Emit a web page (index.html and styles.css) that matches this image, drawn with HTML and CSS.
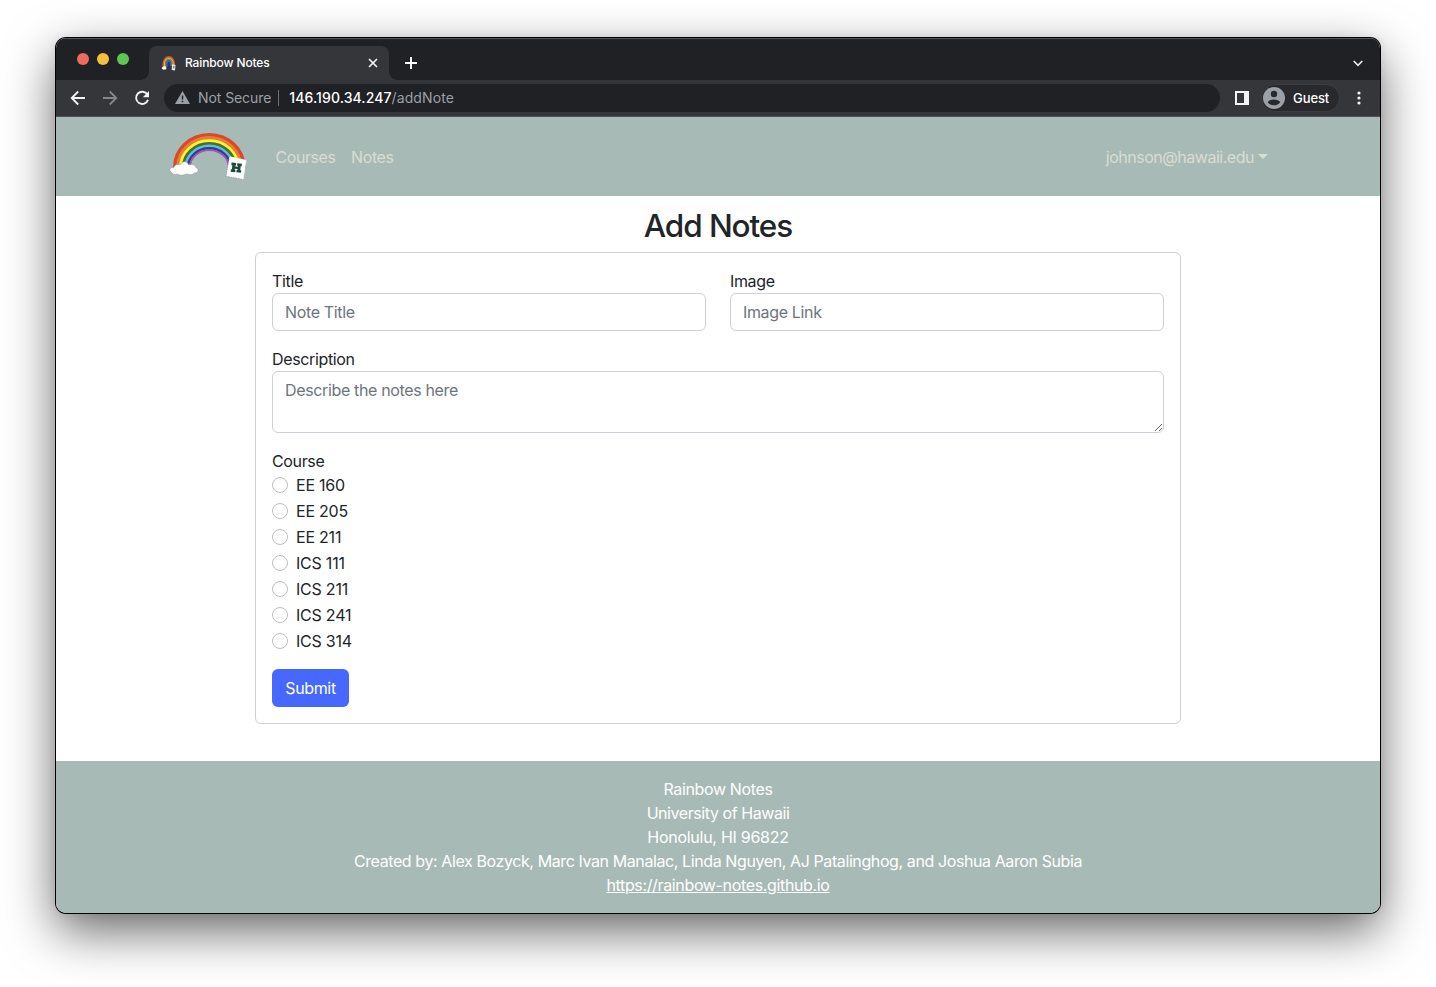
FILE: index.html
```html
<!DOCTYPE html>
<html lang="en">
<head>
<meta charset="utf-8">
<title>Rainbow Notes</title>
<link rel="stylesheet" href="styles.css">
</head>
<body>
<svg class="defs" width="0" height="0" aria-hidden="true">
  <symbol id="rainbow" viewBox="0 0 78 48">
    <g fill="none" stroke-width="3.2" transform="translate(.8 .3)">
      <path d="M5 36V35A34.5 32.5 0 0 1 74 35V36" stroke="#d8492c" stroke-width="3.6"/>
      <path d="M8 36V35A31.5 29.5 0 0 1 71 35V36" stroke="#ec7d2f"/>
      <path d="M10.9 36V35A28.6 26.5 0 0 1 68.1 35V36" stroke="#fdf13a"/>
      <path d="M13.6 36V35A25.9 23.8 0 0 1 65.4 35V36" stroke="#39782c"/>
      <path d="M16.1 36V35A23.4 21.3 0 0 1 62.9 35V36" stroke="#67b8dc" stroke-width="2.8"/>
      <path d="M18.2 36V35A21.3 19.1 0 0 1 60.8 35V36" stroke="#263f96" stroke-width="2.4"/>
      <path d="M20.1 36V35A19.4 17.2 0 0 1 58.9 35V36" stroke="#a552b2" stroke-width="1.8"/>
    </g>
    <path transform="translate(.3 0)" d="M3 41C-1 39 0 35 4.5 35.5C5.5 32 9 32 11 33C12.5 28.5 18 28.5 19.5 33C23 31.5 26 33 26.5 35.5C30.5 37 29 41 25 41C23 43.5 19 42.5 17 42C13 44 9 43 8 42C5 43 3.5 42.5 3 41Z" fill="#fff" stroke="#8d93a5" stroke-width=".5"/>
    <path d="M60.5 24.3L77.4 28L74.4 47.5L57 44.2Z" fill="#fff"/>
    <path d="M60.5 24.3L57 44.2L74.4 47.5" fill="none" stroke="#81908c" stroke-width=".7" stroke-dasharray="1.5 1"/>
    <path transform="translate(67.3 35.7) rotate(6)" d="M-5.2 -4.6H-.6V-2H-1.6V-1.2H1.6V-2H.6V-4.6H5.2V-2H4.2V2H5.2V4.6H.6V2H1.6V1.2H-1.6V2H-.6V4.6H-5.2V2H-4.2V-2H-5.2Z" fill="#1d4a3b"/>
  </symbol>
</svg>
<div class="window">
  <div class="tabstrip">
    <div class="lights"><i class="red"></i><i class="yellow"></i><i class="green"></i></div>
    <div class="tab">
      <svg class="favicon" viewBox="0 0 16 16"><g fill="none" stroke-width="1.5"><path d="M2.2 12V9.5C2.2 -1 13.4 -1 13.4 9.5V11" stroke="#dc5030"/><path d="M3.5 12V9.5C3.5 1 12.1 1 12.1 9.5V11" stroke="#f0b439"/><path d="M4.7 12V9.5C4.7 2.8 10.9 2.8 10.9 9.5V11" stroke="#4f9b53"/><path d="M5.8 12V9.5C5.8 4.6 9.8 4.6 9.8 9.5V11" stroke="#4361c4"/></g><path d="M7 15V9.8Q7.8 7.2 8.8 9.8V15z" fill="#35363a"/><path d="M.8 13.5q0-2 2-2q2-1 2.4 1q.8 2-1.5 2q-2 .6-2.9-1z" fill="#fff"/><path d="M11 9.3l3.5.8-.5 5.5-3.3-.6z" fill="#e5e9e9"/><path d="M12.3 10.8l1.2.4-.4 2.2-.9-.3z" fill="#536660"/></svg>
      <span class="tab-title">Rainbow Notes</span>
      <svg class="close" viewBox="0 0 10 10"><path d="M1 1l8 8M9 1l-8 8" fill="none" stroke="#f1f3f4" stroke-width="1.7"/></svg>
    </div>
    <svg class="plus" viewBox="0 0 12 12"><path d="M6 0v12M0 6h12" stroke="#fff" stroke-width="1.9"/></svg>
    <svg class="chevron" viewBox="0 0 10 7"><path d="M.7 1L5 5.3L9.3 1" fill="none" stroke="#e8eaed" stroke-width="1.7"/></svg>
  </div>
  <div class="toolbar">
    <div class="nav-icons">
      <svg viewBox="0 0 16 16"><path d="M15 8H2M8.2 1.5L1.7 8l6.5 6.5" fill="none" stroke="#f1f3f4" stroke-width="1.8"/></svg>
      <svg viewBox="0 0 16 16"><path d="M1 8h13M7.8 1.5L14.3 8l-6.5 6.5" fill="none" stroke="#85878a" stroke-width="1.8"/></svg>
      <svg viewBox="0 0 16 16"><path d="M13.4 4.6A6.1 6.1 0 1 0 14 9.7" fill="none" stroke="#f1f3f4" stroke-width="1.9"/><path d="M15 1v6.2H8.8z" fill="#f1f3f4"/></svg>
    </div>
    <div class="address">
      <svg class="warn" viewBox="0 0 15 13"><path d="M7.5 0L15 13H0z" fill="#9aa0a6"/><path d="M7.5 4.5v4M7.5 9.7v1.6" stroke="#202124" stroke-width="1.5"/></svg>
      <span class="secure">Not Secure</span><span class="divider"></span>
      <span class="url"><b>146.190.34.247</b><span class="path">/addNote</span></span>
    </div>
    <svg class="panel" viewBox="0 0 14 14"><path d="M0 0h14v14H0zM2 2v10h7V2z" fill="#f1f3f4" fill-rule="evenodd"/></svg>
    <div class="guest">
      <svg viewBox="0 0 22 22"><circle cx="11" cy="11" r="11" fill="#9aa0a6"/><circle cx="11" cy="7" r="3.2" fill="#28292d"/><path d="M4.7 15.2C7 11.7 15 11.7 17.3 15.2C14.5 19.3 7.5 19.3 4.7 15.2z" fill="#28292d"/></svg>
      <span>Guest</span>
    </div>
    <svg class="dots" viewBox="0 0 4 14"><g fill="#f1f3f4"><circle cx="2" cy="2" r="1.6"/><circle cx="2" cy="7" r="1.6"/><circle cx="2" cy="12" r="1.6"/></g></svg>
  </div>
  <nav class="navbar">
    <svg class="logo"><use href="#rainbow"/></svg>
    <a class="courses">Courses</a>
    <a class="notes">Notes</a>
    <a class="account"><span>johnson@hawaii.edu</span><i class="caret"></i></a>
  </nav>
  <main>
    <h2>Add Notes</h2>
    <form class="card">
      <div class="row">
        <div class="field"><label for="title">Title</label><input id="title" placeholder="Note Title"></div>
        <div class="field"><label for="image">Image</label><input id="image" placeholder="Image Link"></div>
      </div>
      <div class="field"><label for="description">Description</label><textarea id="description" rows="2" placeholder="Describe the notes here"></textarea></div>
      <div class="courses-list">
        <div class="legend">Course</div>
        <label><input type="radio" name="course"><span>EE 160</span></label>
        <label><input type="radio" name="course"><span>EE 205</span></label>
        <label><input type="radio" name="course"><span>EE 211</span></label>
        <label><input type="radio" name="course"><span>ICS 111</span></label>
        <label><input type="radio" name="course"><span>ICS 211</span></label>
        <label><input type="radio" name="course"><span>ICS 241</span></label>
        <label><input type="radio" name="course"><span>ICS 314</span></label>
      </div>
      <button type="button">Submit</button>
    </form>
  </main>
  <footer>
    <div>Rainbow Notes</div>
    <div class="university">University of Hawaii</div>
    <div class="city">Honolulu, HI 96822</div>
    <div class="authors">Created by: Alex Bozyck, Marc Ivan Manalac, Linda Nguyen, AJ Patalinghog, and Joshua Aaron Subia</div>
    <div><a>https://rainbow-notes.github.io</a></div>
  </footer>
</div>
</body>
</html>
```
FILE: styles.css
```css
* { box-sizing: border-box; }
body { margin: 0; height: 987px; padding: 38px 56px 74px; background: #fff; overflow: hidden; font: 400 16px/24px Inter, "Liberation Sans", sans-serif; color: #212529; letter-spacing: -0.35px; }
svg { display: block; flex: none; }
.defs { position: absolute; }
.window { height: 875px; border-radius: 10px; overflow: hidden; background: #fff; display: flex; flex-direction: column; box-shadow: 0 0 0 1px #000, 0 18px 50px rgba(0,0,0,.6), 0 0 10px rgba(0,0,0,.1); }
.tabstrip { height: 42px; background: #202124; box-shadow: inset 0 1px #55565a; display: flex; flex: none; align-items: center; padding: 0 17px 0 21px; }
.lights { display: flex; gap: 8px; }
.lights i { width: 12px; height: 12px; border-radius: 50%; }
.red { background: #ed6a5e; }
.yellow { background: #f4bf3f; }
.green { background: #61c554; }
.tab { align-self: flex-end; margin-left: 20px; width: 240px; height: 34px; border-radius: 8px 8px 0 0; background: #35363a; display: flex; align-items: center; padding: 0 11px 0 12px; font-size: 12px; font-weight: 500; letter-spacing: -.12px; color: #fff; position: relative; }
.tab::before, .tab::after { content: ""; position: absolute; bottom: 0; width: 8px; height: 8px; }
.tab::before { left: -8px; background: radial-gradient(circle at 0 0, transparent 7.5px, #35363a 8px); }
.tab::after { right: -8px; background: radial-gradient(circle at 100% 0, transparent 7.5px, #35363a 8px); }
.favicon { width: 16px; height: 16px; margin-right: 8px; }
.close { width: 10px; height: 10px; margin-left: auto; }
.plus { width: 12px; height: 12px; margin: 8px 0 0 16px; }
.chevron { width: 10px; height: 7px; margin: 8px 0 0 auto; }
.toolbar { height: 37px; flex: none; background: #35363a; border-bottom: 1px solid #505255; display: flex; align-items: center; padding: 0 19.5px 0 14px; }
.nav-icons { display: flex; gap: 16px; }
.nav-icons svg { width: 16px; height: 16px; }
.address { height: 28px; width: 1056px; margin-left: 14px; border-radius: 14px; background: #202124; display: flex; align-items: center; padding-left: 11px; font-size: 14px; letter-spacing: 0; color: #9aa0a6; }
.warn { width: 15px; height: 13px; margin: 0 8px 1px 0; }
.secure { letter-spacing: -.08px; }
.divider { width: 1px; height: 16px; background: #6c6f73; margin: 0 10px 0 7px; }
.url { letter-spacing: .1px; }
.url b { font-weight: 500; color: #fff; }
.panel { width: 14px; height: 14px; margin-left: 15px; }
.guest { width: 79px; height: 28px; margin-left: 12px; border-radius: 14px; border: 1px solid #3d3e42; background: #28292d; display: flex; align-items: center; gap: 8px; padding-left: 1px; color: #fff; font-size: 13px; font-weight: 500; letter-spacing: -.08px; }
.guest svg { width: 22px; height: 22px; }
.dots { width: 4px; height: 14px; margin-left: auto; }
.navbar { height: 79px; flex: none; background: #a8bab5; display: flex; align-items: center; padding: 0 112px; color: #d9ddd2; }
.logo { width: 78px; height: 48px; margin: 0 0 2px .5px; }
.courses { margin-left: 29px; letter-spacing: -.42px; }
.notes { margin-left: 15.5px; letter-spacing: -.4px; }
.account { margin-left: auto; display: flex; align-items: center; gap: 4px; letter-spacing: -.48px; }
.caret { border: 5px solid transparent; border-top-color: currentColor; border-bottom: 0; margin-bottom: 1px; }
main { flex: 1; padding-top: 11px; }
h2 { margin: 0 0 7px; font-size: 31.5px; line-height: 38px; font-weight: 500; text-align: center; letter-spacing: -1.1px; }
.card { width: 926px; height: 472px; margin: 0 auto; border: 1px solid #ced0d3; border-radius: 6px; padding: 16px; }
.row { display: flex; gap: 24px; }
.field { flex: 1; margin-bottom: 16px; }
.field > label { display: block; }
.field input, textarea { display: block; width: 100%; border: 1px solid #ced0da; border-radius: 6px; background: #fff; padding: 6px 12px; font: inherit; letter-spacing: inherit; color: #212529; }
.field input { height: 38px; }
textarea { height: 62px; }
::placeholder { color: #6c757d; opacity: 1; }
.courses-list label { display: flex; align-items: center; height: 24px; margin-bottom: 2px; letter-spacing: -.22px; }
.courses-list input { appearance: none; width: 16px; height: 16px; margin: 0 8px 0 0; border: 1px solid #bfbfbf; border-radius: 50%; background: #fff; }
button { display: block; margin-top: 16px; width: 77px; height: 38px; border: 0; border-radius: 6px; padding: 0; font: inherit; letter-spacing: inherit; background: #4668ff; color: #fff; }
footer { height: 152px; flex: none; background: #a8bab5; color: #fff; text-align: center; padding-top: 16px; }
footer a { text-decoration: underline; }
.university { letter-spacing: -.43px; }
.city { letter-spacing: -.27px; }
.authors { letter-spacing: -.4px; }
```
